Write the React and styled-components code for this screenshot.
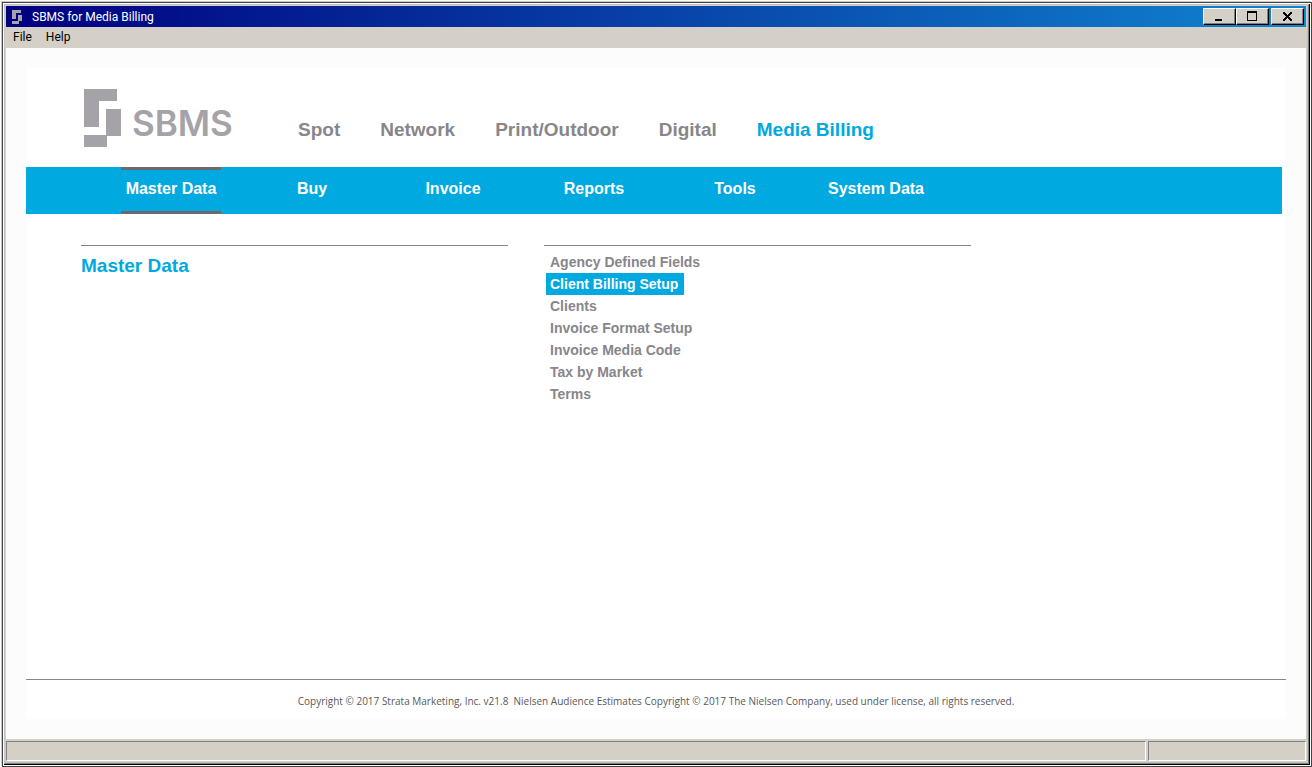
import React, { useState } from 'react';
import styled, { createGlobalStyle } from 'styled-components';

const blue = '#00a9e0';
const grey = '#87868b';
const face = '#d4d0c8';

const GlobalStyle = createGlobalStyle`
  *, *::before, *::after { box-sizing: border-box; }
  body { margin: 0; background: #fff; }
  button { font: inherit; }
  a { color: inherit; text-decoration: none; }
`;

const Screen = styled.div`
  display: flex;
  min-height: 100vh;
  padding: 2px 0 0 2px;
  font-family: 'Liberation Sans', Arial, sans-serif;
`;

const OuterEdge = styled.div`
  display: flex;
  flex: 1;
  min-width: 0;
  border: 1px solid #444;
  box-shadow: -1px -1px 0 #c8c8c8;
  padding: 1px;
`;

const Window = styled.div`
  display: flex;
  flex: 1;
  flex-direction: column;
  min-width: 0;
  padding: 1px 1px 2px;
  background: ${face};
  border: 1px solid #c3c3c3;
  border-right-color: #808080;
  border-bottom-color: #808080;
  box-shadow: inset -1px -1px 0 #c0c0c0;
`;

const Shadow = styled.div`
  display: flex;
  flex: 1;
  min-width: 0;
  border-right: 1px solid #000;
  border-bottom: 1px solid #000;
`;

const TitleBar = styled.header`
  display: flex;
  align-items: center;
  height: 21px;
  padding: 0 2px 0 6px;
  margin-right: 1px;
  background: linear-gradient(to right, #000080, #1084d0);
  color: #fff;
  font: 12px/20px Roboto, sans-serif;
`;

const Caption = styled.span`
  flex: 1;
  padding-left: 10px;
`;

const WindowButtons = styled.div`
  display: flex;
`;

const WindowButton = styled.button`
  width: 33px;
  height: 17px;
  padding: 0;
  margin-left: ${props => (props.$apart ? '2px' : '0')};
  border: 1px solid;
  border-color: #fff #000 #000 #fff;
  background: ${face};
  box-shadow: inset -1px -1px 0 #808080;
  line-height: 0;

  svg { display: block; margin: 0 auto; }
`;

const MenuBar = styled.nav`
  display: flex;
  gap: 14px;
  height: 21px;
  padding-left: 7px;
  color: #000;
  font: 12px/20px Roboto, sans-serif;
`;

const Workspace = styled.main`
  display: flex;
  flex: 1;
  padding: 20px;
  margin-right: 1px;
  background: #fcfcfc;
`;

const Page = styled.div`
  display: flex;
  flex: 1;
  flex-direction: column;
  min-width: 0;
  background: #fff;
`;

const Masthead = styled.div`
  display: flex;
  height: 99px;
  padding: 21px 0 0 58px;
`;

const Brand = styled.div`
  display: flex;
  flex: 0 0 214px;
  gap: 11px;
  color: #a5a3a8;
  font: 600 35px/68px Inter, sans-serif;
`;

const Products = styled.nav`
  display: flex;
  gap: 40px;
  font-size: 19px;
  font-weight: bold;
  line-height: 82px;
`;

const ProductLink = styled.a`
  color: ${props => (props.$active ? blue : grey)};
`;

const Sections = styled.nav`
  display: flex;
  height: 47px;
  padding-left: 74px;
  margin-right: 4px;
  background: ${blue};
`;

const SectionLink = styled.a`
  width: 100px;
  margin: 0 20px 0 21px;
  border: solid ${props => (props.$active ? '#6b696e' : 'transparent')};
  border-width: 3px 0;
  color: #fff;
  font-size: 16px;
  font-weight: bold;
  line-height: 38px;
  text-align: center;
  white-space: nowrap;
`;

const Columns = styled.div`
  display: grid;
  flex: 1;
  grid-template-columns: repeat(2, minmax(0, 427px));
  gap: 36px;
  padding: 31px 55px;
`;

const Column = styled.section`
  border-top: 1px solid ${grey};
`;

const Heading = styled.h1`
  margin: 0;
  color: ${blue};
  font-size: 19px;
  line-height: 40px;
`;

const Items = styled.ul`
  margin: 0;
  padding: 5px 2px;
  list-style: none;
`;

const ItemLink = styled.a`
  display: block;
  width: fit-content;
  padding: 0 6px 0 4px;
  background: ${props => (props.$active ? blue : 'transparent')};
  color: ${props => (props.$active ? '#fff' : grey)};
  font-size: 14px;
  font-weight: bold;
  line-height: 22px;
`;

const Footer = styled.footer`
  height: 40px;
  border-top: 1px solid ${grey};
  color: #59585c;
  font: 10px/42px 'Open Sans', sans-serif;
  text-align: center;
  white-space: pre;
`;

const StatusBar = styled.div`
  display: grid;
  grid-template-columns: 1fr 158px;
  gap: 2px;
  height: 22px;
  padding-top: 2px;
  margin-right: 1px;
`;

const StatusPane = styled.div`
  border: 1px solid;
  border-color: #808080 #fff #fff #808080;
`;

const Logo = ({ width, height }) => (
  <svg width={width} height={height} viewBox="0 0 37 58" fill="currentColor" aria-hidden="true">
    <path d="M0 0H33V12H15V38H0ZM22 20H37V47H23V58H0V46H22Z" />
  </svg>
);

const SmallLogo = () => (
  <svg width="10" height="14" viewBox="0 0 10 14" fill="#a5a3a8" aria-hidden="true">
    <path d="M0 0H9V3H4V9H0ZM6 5H10V11H7V14H0V11H6Z" />
  </svg>
);

const Glyph = ({ d }) => (
  <svg width="11" height="15" viewBox="0 0 11 15" shapeRendering="crispEdges" aria-hidden="true">
    <path fillRule="evenodd" d={d} />
  </svg>
);

const products = ['Spot', 'Network', 'Print/Outdoor', 'Digital', 'Media Billing'];
const sections = ['Master Data', 'Buy', 'Invoice', 'Reports', 'Tools', 'System Data'];
const items = [
  'Agency Defined Fields',
  'Client Billing Setup',
  'Clients',
  'Invoice Format Setup',
  'Invoice Media Code',
  'Tax by Market',
  'Terms',
];

const App = () => {
  const [selected, setSelected] = useState('Client Billing Setup');

  return (
    <Screen>
      <GlobalStyle />
      <OuterEdge>
        <Shadow>
          <Window>
            <TitleBar>
              <SmallLogo />
              <Caption>SBMS for Media Billing</Caption>
              <WindowButtons>
                <WindowButton aria-label="Minimize">
                  <Glyph d="M1 10H8V12H1Z" />
                </WindowButton>
                <WindowButton aria-label="Maximize">
                  <Glyph d="M0 2H10V12H0ZM1 4V11H9V4Z" />
                </WindowButton>
                <WindowButton aria-label="Close" $apart>
                  <Glyph d="M1 3H3V4H4V5H5V6H6V5H7V4H8V3H10V5H9V6H8V7H7V8H8V9H9V10H10V12H8V11H7V10H6V9H5V10H4V11H3V12H1V10H2V9H3V8H4V7H3V6H2V5H1Z" />
                </WindowButton>
              </WindowButtons>
            </TitleBar>
            <MenuBar>
              <a href="#file">File</a>
              <a href="#help">Help</a>
            </MenuBar>
            <Workspace>
              <Page>
                <Masthead>
                  <Brand>
                    <Logo width={37} height={58} />
                    SBMS
                  </Brand>
                  <Products>
                    {products.map(name => (
                      <ProductLink key={name} href="#product" $active={name === 'Media Billing'}>
                        {name}
                      </ProductLink>
                    ))}
                  </Products>
                </Masthead>
                <Sections>
                  {sections.map(name => (
                    <SectionLink key={name} href="#section" $active={name === 'Master Data'}>
                      {name}
                    </SectionLink>
                  ))}
                </Sections>
                <Columns>
                  <Column>
                    <Heading>Master Data</Heading>
                  </Column>
                  <Column>
                    <Items>
                      {items.map(name => (
                        <li key={name}>
                          <ItemLink
                            href="#item"
                            $active={name === selected}
                            onMouseEnter={() => setSelected(name)}
                          >
                            {name}
                          </ItemLink>
                        </li>
                      ))}
                    </Items>
                  </Column>
                </Columns>
                <Footer>
                  {'Copyright © 2017 Strata Marketing, Inc. v21.8  Nielsen Audience Estimates Copyright © 2017 The Nielsen Company, used under license, all rights reserved.'}
                </Footer>
              </Page>
            </Workspace>
            <StatusBar>
              <StatusPane />
              <StatusPane />
            </StatusBar>
          </Window>
        </Shadow>
      </OuterEdge>
    </Screen>
  );
};

export default App;
